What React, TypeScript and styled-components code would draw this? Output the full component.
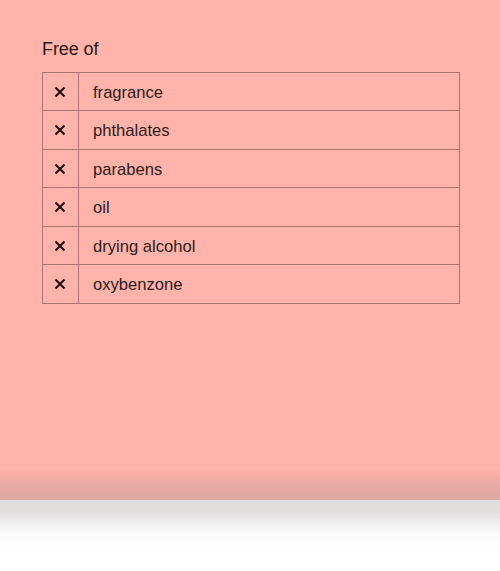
import React from "react";
import styled, { createGlobalStyle } from "styled-components";

const Global = createGlobalStyle`
  html, body { margin: 0; padding: 0; background: #ffffff; }
  body { font-family: "Liberation Sans", Arial, sans-serif; }
`;

const Page = styled.div`
  width: 500px;
  height: 571px;
  display: flex;
  flex-direction: column;
  background: #ffffff;
`;

const Panel = styled.section`
  height: 500px;
  box-sizing: border-box;
  padding: 38px 40px 0 42px;
  background: linear-gradient(
    to bottom,
    #ffb3aa 0px,
    #ffb3aa 468px,
    #f3aca4 478px,
    #e3a9a3 490px,
    #dcaaa4 500px
  );
  display: flex;
  flex-direction: column;
`;

const Shadow = styled.div`
  flex: 1;
  background: linear-gradient(
    to bottom,
    #e2dfdf 0px,
    #dfdddc 10px,
    #eeeded 22px,
    #fafafa 34px,
    #ffffff 48px
  );
`;

const Title = styled.h2`
  margin: 0 0 12px 0;
  font-size: 18px;
  line-height: 22px;
  font-weight: 400;
  color: #2a1815;
  letter-spacing: -0.1px;
`;

const Table = styled.div`
  border: 1px solid #a9756f;
  border-bottom: none;
  display: flex;
  flex-direction: column;
`;

const Row = styled.div<{ $tall: boolean }>`
  height: ${(p) => (p.$tall ? 39 : 38)}px;
  box-sizing: border-box;
  border-bottom: 1px solid #a9756f;
  display: grid;
  grid-template-columns: 36px 1fr;
`;

const IconCell = styled.div`
  border-right: 1px solid #a9756f;
  display: flex;
  align-items: center;
  justify-content: center;
  padding-right: 1px;
`;

const LabelCell = styled.div`
  display: flex;
  align-items: center;
  padding-left: 14px;
  padding-top: 2px;
  font-size: 16.6px;
  color: #2e1c19;
`;

const Cross = () => (
  <svg width="12" height="12" viewBox="0 0 12 12">
    <path d="M1.5 1.5 L10.5 10.5 M10.5 1.5 L1.5 10.5" stroke="#1e1412" strokeWidth="2.1" strokeLinecap="butt" />
  </svg>
);

const items = ["fragrance", "phthalates", "parabens", "oil", "drying alcohol", "oxybenzone"];

export default function App() {
  return (
    <>
      <Global />
      <Page>
        <Panel>
          <Title>Free of</Title>
          <Table>
            {items.map((it, i) => (
              <Row key={it} $tall={i % 2 === 1}>
                <IconCell>
                  <Cross />
                </IconCell>
                <LabelCell>{it}</LabelCell>
              </Row>
            ))}
          </Table>
        </Panel>
        <Shadow />
      </Page>
    </>
  );
}
